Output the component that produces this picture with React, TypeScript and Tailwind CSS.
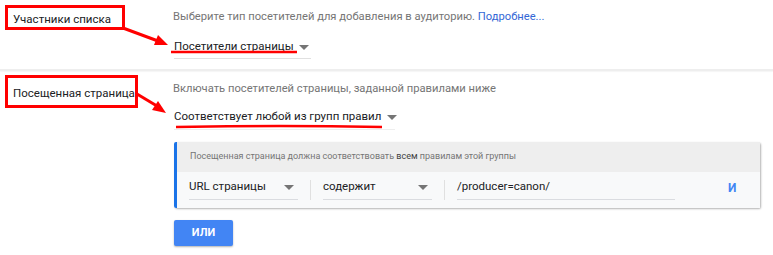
import { clsx } from 'clsx';

function Caret({ className }: { className?: string }) {
  return (
    <svg width="10" height="5" viewBox="0 0 10 5" className={clsx('shrink-0', className)}>
      <path d="M0 0 L10 0 L5 5 Z" fill="#757575" />
    </svg>
  );
}

function LabelBox({ text, className }: { text: string; className?: string }) {
  return (
    <div
      className={clsx(
        'border-[3px] border-[#ff0000] bg-white text-[11.5px] leading-4 text-[#202124] pl-[5px] whitespace-nowrap',
        className
      )}
    >
      {text}
    </div>
  );
}

function Field({ label, width, caret = true }: { label: string; width: string; caret?: boolean }) {
  return (
    <div className={clsx('flex flex-col', width)}>
      <div className="flex items-center justify-between h-[20px] pr-[4px]">
        <span className="text-[11.5px] text-[#202124] whitespace-nowrap">{label}</span>
        {caret && <Caret />}
      </div>
      <div className="h-px bg-[#dadce0] mt-[2px]" />
    </div>
  );
}

export default function App() {
  return (
    <div className="relative w-[773px] h-[255px] bg-white overflow-hidden font-['Roboto',sans-serif]">
      {/* section 1 */}
      <div className="flex h-[69px]">
        <div className="w-[173px] shrink-0 pt-[5px] pl-[5px]">
          <LabelBox text="Участники списка" className="w-[120px] h-[25px] pt-[3px]" />
        </div>
        <div className="flex flex-col pt-[9px]">
          <div className="text-[11.2px] leading-4 text-[#757575] whitespace-nowrap">
            Выберите тип посетителей для добавления в аудиторию.{' '}
            <span className="text-[#3367d6]">Подробнее...</span>
          </div>
          <div className="mt-[12px] ml-px w-[137px]">
            <div className="flex items-center h-[20px] gap-[5px]">
              <span className="text-[11.5px] text-[#202124] whitespace-nowrap">Посетители страницы</span>
              <Caret />
            </div>
            <div className="h-px bg-[#e0e0e0] mt-[1px]" />
          </div>
        </div>
      </div>

      <div className="h-[2px] bg-[#eeeeee] shadow-[0_1px_1px_rgba(0,0,0,0.04)]" />

      {/* section 2 */}
      <div className="flex">
        <div className="w-[173px] shrink-0 pt-[4px] pl-[5px]">
          <LabelBox text="Посещенная страница" className="w-[133px] h-[33px] pt-[7px]" />
        </div>
        <div className="flex flex-col pt-[10px]">
          <div className="text-[11.2px] leading-4 text-[#757575] whitespace-nowrap">
            Включать посетителей страницы, заданной правилами ниже
          </div>
          <div className="mt-[10px] ml-px w-[221px]">
            <div className="flex items-center h-[20px] gap-[6px]">
              <span className="text-[11.5px] text-[#202124] whitespace-nowrap">
                Соответствует любой из групп правил
              </span>
              <Caret />
            </div>
            <div className="h-px bg-[#eeeeee] mt-[2px]" />
          </div>

          {/* rule card */}
          <div className="mt-[12px] ml-px w-[586px] border-l-[3px] border-[#1a73e8] rounded-[2px] shadow-[1px_1px_2px_rgba(0,0,0,0.3)]">
            <div className="h-[30px] bg-[#eeeeee] flex items-center pl-[13px] text-[9px] text-[#757575] whitespace-nowrap">
              Посещенная страница должна соответствовать&nbsp;
              <span className="text-[#424242]">всем</span>&nbsp;правилам этой группы
            </div>
            <div className="h-[36px] bg-[#f8f9fa] flex items-start pt-[5px] pl-[12px]">
              <Field label="URL страницы" width="w-[109px]" />
              <div className="w-px h-[20px] bg-[#e0e0e0] mt-[3px] mx-[12px]" />
              <Field label="содержит" width="w-[109px]" />
              <div className="w-px h-[20px] bg-[#e0e0e0] mt-[3px] mx-[12px]" />
              <Field label="/producer=canon/" width="w-[218px]" caret={false} />
              <span className="ml-[53px] mt-[2px] text-[12px] font-bold text-[#4285f4]">И</span>
            </div>
          </div>

          <button className="mt-[12px] ml-px w-[59px] h-[26px] rounded-[2px] bg-[#4285f4] text-white text-[11px] font-bold shadow-[0_1px_2px_rgba(0,0,0,0.3)]">
            ИЛИ
          </button>
        </div>
      </div>

      {/* red annotations */}
      <svg className="absolute inset-0 pointer-events-none" width="773" height="255">
        <line x1="123" y1="28" x2="158" y2="41" stroke="#ff0000" strokeWidth="3" />
        <path d="M168 45 L154 45 L158 35 Z" fill="#ff0000" />
        <line x1="137" y1="94" x2="157" y2="106" stroke="#ff0000" strokeWidth="3" />
        <path d="M166 113 L152 110 L158 101 Z" fill="#ff0000" />
        <path d="M171 52 L297 52" stroke="#ff0000" strokeWidth="2.5" />
        <path d="M176 127 Q280 125 382 127" stroke="#ff0000" strokeWidth="2.5" fill="none" />
      </svg>
    </div>
  );
}
